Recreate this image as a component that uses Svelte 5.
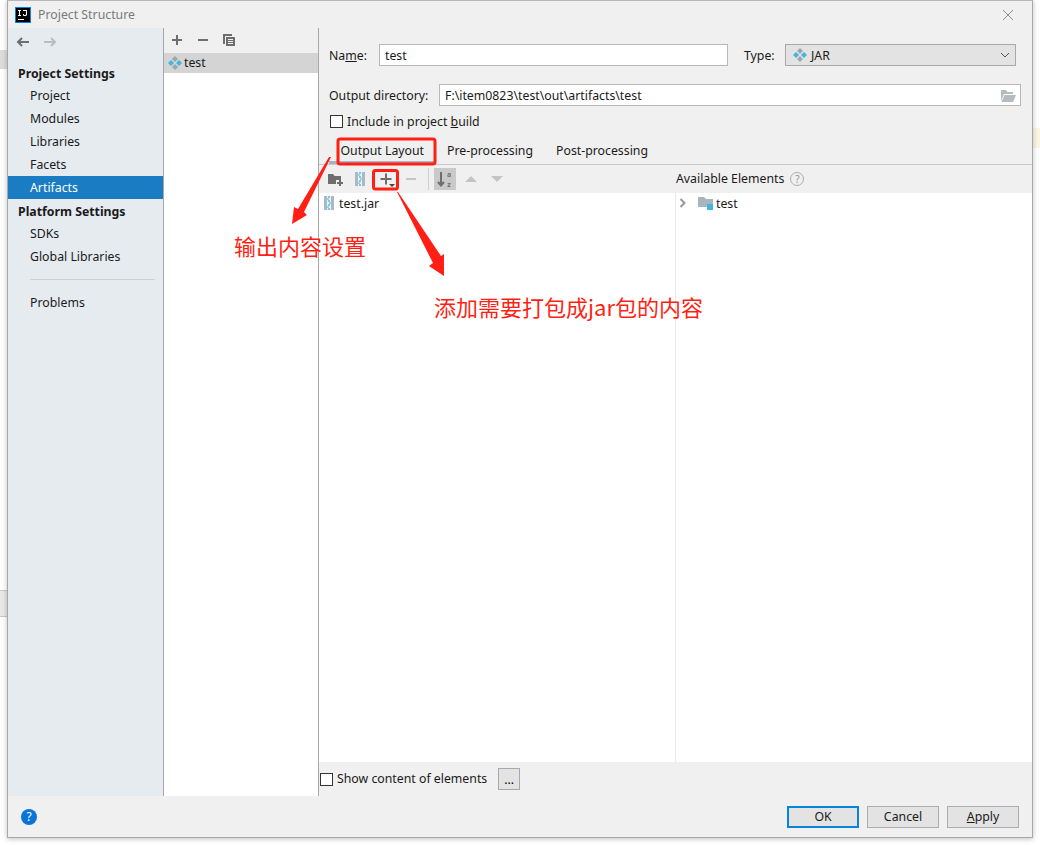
<script>
  const settings = ['Project', 'Modules', 'Libraries', 'Facets', 'Artifacts'];
  const platform = ['SDKs', 'Global Libraries'];
  const tabs = ['Output Layout', 'Pre-processing', 'Post-processing'];
  let activeTab = $state('Output Layout');
</script>

{#snippet artifact()}
  <svg class="artifact" width="16" height="16" viewBox="0 0 16 16">
    <path d="M8 1l3 3-3 3-3-3z" fill="#9aa7b0" />
    <path d="M8 9l3 3-3 3-3-3z" fill="#9aa7b0" />
    <path d="M4 5l3 3-3 3-3-3z" fill="#40b6e0" />
    <path d="M12 5l3 3-3 3-3-3z" fill="#40b6e0" />
  </svg>
{/snippet}

{#snippet jar()}
  <svg width="12" height="16" viewBox="0 0 12 16">
    <rect x="1" y="1" width="10" height="14" fill="#adb8c0" />
    <path d="M4 1h4v14H4z" fill="#e2f2f9" />
    <path d="M5 1h2v2H5zM5 5h2v2H5zM5 9h2v2H5zM5 13h2v2H5z" fill="#7cc9e8" />
    <path d="M4 3h2v2H4zM6 7h2v2H6zM4 11h2v2H4z" fill="#7cc9e8" opacity=".7" />
  </svg>
{/snippet}

<div class="page">
  <div class="behind top"></div>
  <div class="behind low"></div>
  <div class="behind note"></div>

  <div class="window">
    <header class="titlebar">
      <svg class="logo" width="16" height="16" viewBox="0 0 16 16">
        <rect x="0.5" y="0.5" width="15" height="15" fill="#000" stroke="#087cfa" />
        <rect x="3" y="12" width="6" height="1" fill="#fff" />
        <path d="M3 3h3v1H5v4h1v1H3V8h1V4H3zM8 3h4v5l-1 1H8.500L8 8V7h1v1h1.500L11 7.500V4H8z" fill="#fff" />
      </svg>
      <span class="title">Project Structure</span>
      <svg class="close" width="12" height="12" viewBox="0 0 12 12">
        <path d="M1 1l10 10M11 1L1 11" stroke="#8c8c8c" fill="none" />
      </svg>
    </header>

    <div class="body">
      <nav class="sidebar">
        <div class="history">
          <svg width="16" height="16" viewBox="0 0 16 16">
            <path d="M14 8H3M7 4L3 8l4 4" stroke="#6e6e6e" stroke-width="2" fill="none" />
          </svg>
          <svg width="16" height="16" viewBox="0 0 16 16">
            <path d="M2 8h11M9 4l4 4-4 4" stroke="#bdbdbd" stroke-width="2" fill="none" />
          </svg>
        </div>
        <div class="group">Project Settings</div>
        {#each settings as item}
          <div class="item" class:selected={item === 'Artifacts'}>{item}</div>
        {/each}
        <div class="group">Platform Settings</div>
        {#each platform as item}
          <div class="item">{item}</div>
        {/each}
        <div class="divider"></div>
        <div class="item">Problems</div>
      </nav>

      <section class="list">
        <div class="list-tools">
          <svg width="14" height="14" viewBox="0 0 14 14"><path d="M2 7h10M7 2v10" stroke="#6e6e6e" stroke-width="2" /></svg>
          <svg width="14" height="14" viewBox="0 0 14 14"><path d="M2 7h10" stroke="#6e6e6e" stroke-width="2" /></svg>
          <svg width="14" height="14" viewBox="0 0 14 14">
            <path d="M1 1h9v2H3v8H1z" fill="#6e6e6e" />
            <path d="M4 4h9v9H4z" fill="#6e6e6e" />
            <path d="M6 6.500h5M6 8.500h5M6 10.500h5" stroke="#f0f0f0" />
          </svg>
        </div>
        <div class="list-row">{@render artifact()}<span>test</span></div>
      </section>

      <main class="detail">
        <div class="form">
          <div class="row name-row">
            <label class="name-label" for="name">Na<u>m</u>e:</label>
            <input id="name" class="field name-field" value="test" />
            <span class="type-label">Type:</span>
            <div class="select">
              {@render artifact()}
              <span>JAR</span>
              <svg class="chevron" width="10" height="6" viewBox="0 0 10 6"><path d="M1 1l4 4 4-4" stroke="#555" fill="none" /></svg>
            </div>
          </div>
          <div class="row dir-row">
            <label class="dir-label" for="dir">Output directory:</label>
            <div class="dir-field">
              <input id="dir" class="field" value="F:\item0823\test\out\artifacts\test" />
              <svg class="folder" width="16" height="12" viewBox="0 0 16 12">
                <path d="M1 0h5l1 2h6v2H4L1 11z" fill="#b4bcc2" />
                <path d="M4.500 5H16l-3 7H1.500z" fill="#b4bcc2" />
              </svg>
            </div>
          </div>
          <div class="check-row">
            <span class="check"></span>
            <span>Include in project <u>b</u>uild</span>
          </div>
        </div>

        <div class="tabs">
          {#each tabs as tab}
            <button class="tab" class:active={tab === activeTab} onclick={() => (activeTab = tab)}>{tab}</button>
          {/each}
        </div>

        <div class="layout-bar">
          <div class="tools">
            <svg class="t1" width="16" height="14" viewBox="0 0 16 14">
              <path d="M1 2h5l1.500 2H14v4H9v4H1z" fill="#6e6e6e" />
              <path d="M10 11h6M13 8v6" stroke="#6e6e6e" stroke-width="2" />
            </svg>
            <span class="t2">{@render jar()}</span>
            <svg class="t3" width="14" height="14" viewBox="0 0 14 14">
              <path d="M1.500 7h11M7 1.500v11" stroke="#6e6e6e" stroke-width="2" />
              <path d="M10 12h6l-3 3z" fill="#444" />
            </svg>
            <svg class="t4" width="12" height="14" viewBox="0 0 12 14"><path d="M1 7h10" stroke="#c4c4c4" stroke-width="2" /></svg>
            <span class="sep"></span>
            <span class="sort">
              <svg width="20" height="22" viewBox="0 0 20 22">
                <path d="M6 4v13M3 14l3 3.500 3-3.500" stroke="#6e6e6e" stroke-width="2" fill="none" />
                <text class="az" x="14" y="9" text-anchor="middle">a</text>
                <text class="az" x="14" y="19" text-anchor="middle">z</text>
              </svg>
            </span>
            <svg class="tri" width="14" height="8" viewBox="0 0 14 8"><path d="M7 1l6 6H1z" fill="#c4c4c4" /></svg>
            <svg class="tri" width="14" height="8" viewBox="0 0 14 8"><path d="M1 1h12L7 7z" fill="#c4c4c4" /></svg>
          </div>
          <div class="available">
            <span>Available Elements</span>
            <span class="hint">?</span>
          </div>
        </div>

        <div class="panes">
          <div class="pane left">
            <div class="tree-row">{@render jar()}<span>test.jar</span></div>
          </div>
          <div class="pane right">
            <div class="tree-row">
              <svg class="expander" width="8" height="10" viewBox="0 0 8 10"><path d="M1.500 1l4 4-4 4" stroke="#9a9a9a" stroke-width="2" fill="none" /></svg>
              <svg class="module" width="16" height="14" viewBox="0 0 16 14">
                <path d="M0 1h6l2 2h7v8H0z" fill="#aab4bc" />
                <rect x="9" y="8" width="6" height="6" fill="#40b6e0" />
              </svg>
              <span>test</span>
            </div>
          </div>
        </div>

        <div class="show-row">
          <span class="check"></span>
          <span class="show-label">Show content of elements</span>
          <button class="dots">...</button>
        </div>
      </main>
    </div>

    <footer class="footer">
      <span class="help">?</span>
      <div class="actions">
        <button class="btn primary">OK</button>
        <button class="btn">Cancel</button>
        <button class="btn"><u>A</u>pply</button>
      </div>
    </footer>
  </div>

  <!-- annotations drawn over the screenshot -->
  <svg class="marks" width="1040" height="845" viewBox="0 0 1040 845">
    <rect x="338" y="139" width="97" height="25" rx="2" fill="none" stroke="#ff1f14" stroke-width="3" />
    <rect x="373.500" y="170.500" width="24" height="18.500" rx="2" fill="none" stroke="#ff1f14" stroke-width="3" />
    <path d="M331 157L304 212L307 215L292 224L294 207L298 209L329 157z" fill="#ff1f14" />
    <path d="M398 192L441 256L444 254L444 276L429 266L433 263L397 192z" fill="#ff1f14" />
  </svg>
  <span class="note-text first">输出内容设置</span>
  <span class="note-text second">添加需要打包成jar包的内容</span>
</div>

<style>
  :global(body) {
    margin: 0;
    background: #fff;
  }

  .page {
    position: relative;
    width: 1040px;
    height: 845px;
    overflow: hidden;
    padding-left: 7px;
    box-sizing: border-box;
    font-family: "Noto Sans", "Noto Sans CJK SC", sans-serif;
    font-size: 12.300px;
    color: #1a1a1a;
  }

  .behind {
    position: absolute;
    background: #dcdcdc;
  }
  .behind.top { left: 0; top: 50px; width: 7px; height: 19px; }
  .behind.low { left: 0; top: 590px; width: 7px; height: 27px; background: #e8e8e8; border-top: 1px solid #c8c8c8; border-bottom: 1px solid #c8c8c8; box-sizing: border-box; }
  .behind.note { right: 0; top: 128px; width: 7px; height: 20px; background: #fbf6e3; }

  .window {
    position: relative;
    width: 1026px;
    height: 838px;
    background: #f0f0f0;
    border: 1px solid #a8a8a8;
    border-top-color: #b8b8b8;
    box-sizing: border-box;
    box-shadow: 0 1px 5px rgba(0, 0, 0, 0.25);
    display: flex;
    flex-direction: column;
  }

  .titlebar {
    height: 27px;
    display: flex;
    align-items: center;
    padding-left: 7px;
    flex: none;
  }
  .title {
    margin-left: 7px;
    margin-top: -1px;
    color: #7a7a7a;
  }
  .close {
    margin-left: auto;
    margin-right: 18px;
  }

  .body {
    flex: 1;
    display: flex;
    min-height: 0;
  }

  .sidebar {
    width: 155px;
    flex: none;
    background: #e6ebf0;
    border-right: 1px solid #a8a8a8;
  }
  .history {
    height: 27px;
    display: flex;
    align-items: center;
    gap: 11px;
    padding-left: 7px;
  }
  .group {
    height: 23px;
    line-height: 23px;
    padding-left: 10px;
    font-weight: 700;
    margin-top: 7px;
    margin-bottom: -1px;
  }
  .item + .group {
    margin-top: 1px;
  }
  .item {
    height: 23px;
    line-height: 23px;
    padding-left: 22px;
  }
  .item.selected {
    background: #1a7dc4;
    color: #fff;
  }
  .divider {
    height: 1px;
    background: #cdd1d5;
    margin: 11px 8px 11px 22px;
  }

  .list {
    width: 154px;
    flex: none;
    background: #fff;
    border-right: 1px solid #a8a8a8;
  }
  .list-tools {
    height: 25px;
    padding-bottom: 1px;
    box-sizing: border-box;
    background: #f0f0f0;
    display: flex;
    align-items: center;
    gap: 12px;
    padding-left: 6px;
  }
  .list-row {
    height: 20px;
    background: #d4d4d4;
    display: flex;
    align-items: center;
    gap: 1px;
    padding-left: 3px;
  }
  .list-row span {
    padding-bottom: 2px;
  }

  .detail {
    flex: 1;
    min-width: 0;
    display: flex;
    flex-direction: column;
  }
  .form {
    padding: 16px 11px 0 10px;
  }
  .row {
    display: flex;
    align-items: center;
  }
  .field {
    height: 22px;
    box-sizing: border-box;
    border: 1px solid #b8b8b8;
    background: #fff;
    padding: 0 5px;
    font: inherit;
    color: inherit;
    outline: none;
  }
  .name-label { width: 50px; }
  .name-field { width: 349px; }
  .type-label { margin-left: 16px; width: 41px; }
  .select {
    width: 231px;
    height: 22px;
    box-sizing: border-box;
    border: 1px solid #a8a8a8;
    background: #e3e3e3;
    display: flex;
    align-items: center;
    gap: 3px;
    padding-left: 6px;
  }
  .chevron { margin-left: auto; margin-right: 5px; }
  .dir-row { margin-top: 18px; }
  .dir-label { width: 110px; }
  .dir-field {
    position: relative;
    width: 582px;
  }
  .dir-field .field { width: 100%; display: block; }
  .folder { position: absolute; right: 5px; top: 6px; }
  .check-row {
    display: flex;
    align-items: center;
    gap: 4px;
    height: 18px;
    margin-top: 6px;
    padding-left: 1px;
  }
  .check {
    width: 13px;
    height: 13px;
    box-sizing: border-box;
    border: 1px solid #333;
    background: #fff;
    flex: none;
  }

  .tabs {
    display: flex;
    height: 25px;
    margin-top: 9px;
    padding-left: 10px;
    border-bottom: 1px solid #c8c8c8;
  }
  .tab {
    border: 0;
    background: none;
    font: inherit;
    color: inherit;
    padding: 0 11.500px 2px;
    height: 25px;
    box-sizing: border-box;
  }
  .tab.active {
    box-shadow: inset 0 -3px 0 #a6b4c4;
  }

  .layout-bar {
    height: 28px;
    display: flex;
    align-items: center;
    flex: none;
  }
  .tools {
    width: 356px;
    display: flex;
    align-items: center;
    padding-left: 8px;
    box-sizing: border-box;
  }
  .t2 { margin-left: 11px; display: flex; }
  .t3 { margin-left: 13px; overflow: visible; }
  .t4 { margin-left: 12px; }
  .sep { width: 1px; height: 22px; background: #cfcfcf; margin: 0 5px 0 11px; }
  .sort {
    width: 22px;
    height: 22px;
    background: #c9c9c9;
    display: flex;
    align-items: center;
    justify-content: center;
  }
  .az {
    font-size: 7px;
    font-weight: 700;
    fill: #6e6e6e;
  }
  .tri { margin-left: 8px; margin-right: 4px; }
  .available {
    display: flex;
    align-items: center;
    gap: 6px;
    padding-left: 1px;
    padding-bottom: 1px;
  }
  .hint {
    width: 12px;
    height: 12px;
    border: 1px solid #adadad;
    border-radius: 50%;
    color: #909090;
    font-size: 10px;
    line-height: 12px;
    text-align: center;
  }

  .panes {
    flex: 1;
    min-height: 0;
    display: flex;
    background: #fff;
  }
  .pane.left {
    width: 357px;
    box-sizing: border-box;
    border-right: 1px solid #e8e8e8;
    padding-left: 4px;
  }
  .pane.right {
    padding-left: 3px;
  }
  .tree-row {
    height: 20px;
    display: flex;
    align-items: center;
    gap: 4px;
  }
  .module { margin-left: 7px; margin-right: -2px; }

  .show-row {
    height: 34px;
    display: flex;
    align-items: center;
    flex: none;
    padding-left: 1px;
  }
  .show-label {
    margin-left: 4px;
    padding-bottom: 2px;
  }
  .dots {
    width: 22px;
    height: 22px;
    margin-left: 11px;
    border: 1px solid #a8a8a8;
    background: #e3e3e3;
    font: inherit;
    padding: 0;
  }

  .footer {
    height: 41px;
    flex: none;
    display: flex;
    align-items: center;
    padding: 0 13px 0 13px;
    box-sizing: border-box;
  }
  .help {
    width: 16px;
    height: 16px;
    border-radius: 50%;
    background: #0a74d6;
    color: #fff;
    font-size: 12px;
    line-height: 16px;
    text-align: center;
  }
  .actions {
    margin-left: auto;
    display: flex;
    gap: 8px;
  }
  .btn {
    width: 72px;
    height: 22px;
    border: 1px solid #adadad;
    background: #e3e3e3;
    font: inherit;
    color: inherit;
    padding: 0;
  }
  .btn.primary {
    border: 2px solid #0a84d8;
  }

  .marks {
    position: absolute;
    left: 0;
    top: 0;
    pointer-events: none;
  }
  .note-text {
    position: absolute;
    color: #ff1f14;
    font-family: "Noto Sans CJK SC", sans-serif;
    font-size: 22px;
    line-height: 30px;
    white-space: nowrap;
  }
  .note-text.first { left: 234px; top: 230px; }
  .note-text.second { left: 434px; top: 291px; }
</style>
